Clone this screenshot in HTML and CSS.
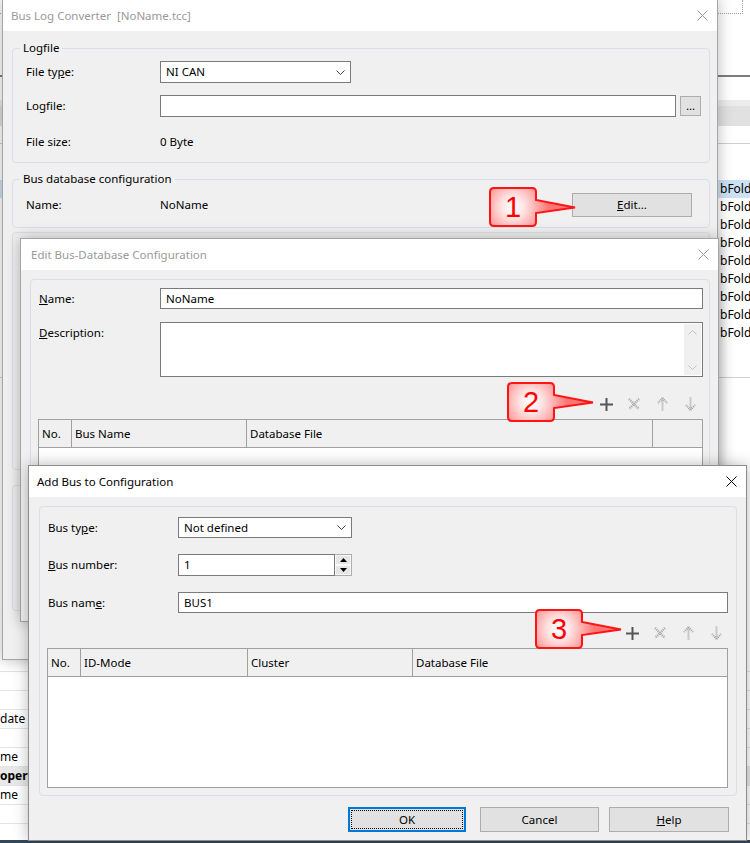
FILE: index.html
```html
<!DOCTYPE html>
<html lang="en">
<head>
<meta charset="UTF-8">
<meta name="viewport" content="width=device-width, initial-scale=1.0">
<title>Bus Log Converter</title>
<link rel="stylesheet" href="styles.css">
</head>
<body>

<!-- application behind the dialogs -->
<div class="app">
  <div class="app-tool"><div class="app-mark"></div></div>
  <div class="app-tabs"></div>
  <div class="app-cols"></div>
  <div class="app-list">
    <div class="app-row sel"><span class="skip"></span>bFold</div>
    <div class="app-row"><span class="skip"></span>bFold</div>
    <div class="app-row"><span class="skip"></span>bFold</div>
    <div class="app-row"><span class="skip"></span>bFold</div>
    <div class="app-row"><span class="skip"></span>bFold</div>
    <div class="app-row"><span class="skip"></span>bFold</div>
    <div class="app-row"><span class="skip"></span>bFold</div>
    <div class="app-row"><span class="skip"></span>bFold</div>
    <div class="app-row"><span class="skip"></span>bFold</div>
  </div>
  <div class="props">
    <div class="prop"></div>
    <div class="prop"></div>
    <div class="prop"></div>
    <div class="prop">date</div>
    <div class="prop"></div>
    <div class="prop">me</div>
    <div class="prop cat">operti</div>
    <div class="prop">me</div>
    <div class="prop"></div>
    <div class="prop"></div>
  </div>
  <div class="taskbar"></div>
</div>

<!-- Bus Log Converter -->
<div class="win win-main">
  <div class="titlebar">
    <span>Bus Log Converter&nbsp; [NoName.tcc]</span>
    <svg class="close" width="11" height="11" viewBox="0 0 11 11"><path d="M0.5 0.5L10.5 10.5M10.5 0.5L0.5 10.5" stroke="currentColor" stroke-width="1"/></svg>
  </div>
  <div class="win-body">
    <fieldset class="grp">
      <legend>Logfile</legend>
      <div class="form form-log">
        <label>File ty<u>p</u>e:</label>
        <div class="select sel-type">NI CAN
          <svg width="9" height="5" viewBox="0 0 9 5"><path d="M0.5 0.5L4.5 4.5L8.5 0.5" fill="none" stroke="#444"/></svg>
        </div>
        <label>Lo<u>g</u>file:</label>
        <div class="file-row">
          <div class="input"></div>
          <button class="btn btn-dots">...</button>
        </div>
        <label>File size:</label>
        <span>0 Byte</span>
      </div>
    </fieldset>

    <fieldset class="grp grp-db">
      <legend>Bus database configuration</legend>
      <div class="form form-db">
        <label>Name:</label>
        <span>NoName</span>
        <button class="btn btn-edit"><u>E</u>dit...</button>
      </div>
    </fieldset>

    <div class="grp-plain grp-a"></div>
    <div class="grp-plain grp-b"></div>
  </div>
</div>

<!-- Edit Bus-Database Configuration -->
<div class="win win-edit">
  <div class="titlebar">
    <span>Edit Bus-Database Configuration</span>
    <svg class="close" width="11" height="11" viewBox="0 0 11 11"><path d="M0.5 0.5L10.5 10.5M10.5 0.5L0.5 10.5" stroke="currentColor" stroke-width="1"/></svg>
  </div>
  <div class="win-body">
    <div class="box">
      <div class="stack stack-edit">
        <div class="frow">
          <label><u>N</u>ame:</label>
          <div class="input h21">NoName</div>
        </div>
        <div class="frow frow-top">
          <label><u>D</u>escription:</label>
          <div class="textarea">
            <div class="vscroll">
              <svg width="9" height="5" viewBox="0 0 9 5"><path d="M0.5 4.5L4.5 0.5L8.5 4.5" fill="none" stroke="#c2c2c2"/></svg>
              <svg width="9" height="5" viewBox="0 0 9 5"><path d="M0.5 0.5L4.5 4.5L8.5 0.5" fill="none" stroke="#c2c2c2"/></svg>
            </div>
          </div>
        </div>
        <div class="tools tools-edit">
          <span class="tool"><svg width="13" height="13" viewBox="0 0 13 13"><path d="M6.5 0V13M0 6.5H13" stroke="#555" stroke-width="2"/></svg></span>
          <span class="tool"><svg width="12" height="12" viewBox="0 0 12 12"><path d="M1 1L11 11M11 1L1 11" stroke="#a2a2a2" stroke-width="2.5" stroke-dasharray="1 1"/></svg></span>
          <span class="tool"><svg width="11" height="14" viewBox="0 0 11 14"><path d="M5.5 1L1 6M5.5 1L10 6M5.5 1.5V14" fill="none" stroke="#a2a2a2" stroke-width="2" stroke-dasharray="1 1"/></svg></span>
          <span class="tool"><svg width="11" height="14" viewBox="0 0 11 14"><path d="M5.5 13L1 8M5.5 13L10 8M5.5 12.5V0" fill="none" stroke="#a2a2a2" stroke-width="2" stroke-dasharray="1 1"/></svg></span>
        </div>
        <div class="tbl tbl-buses">
          <div class="thead">
            <div>No.</div>
            <div>Bus Name</div>
            <div>Database File</div>
            <div></div>
          </div>
          <div class="tbody"></div>
        </div>
      </div>
    </div>
  </div>
</div>

<!-- Add Bus to Configuration -->
<div class="win win-add">
  <div class="titlebar">
    <span>Add Bus to Configuration</span>
    <svg class="close" width="11" height="11" viewBox="0 0 11 11"><path d="M0.5 0.5L10.5 10.5M10.5 0.5L0.5 10.5" stroke="currentColor" stroke-width="1"/></svg>
  </div>
  <div class="win-body">
    <div class="box">
      <div class="stack stack-add">
        <div class="frow">
          <label>Bus ty<u>p</u>e:</label>
          <div class="select sel-bus">Not defined
            <svg width="9" height="5" viewBox="0 0 9 5"><path d="M0.5 0.5L4.5 4.5L8.5 0.5" fill="none" stroke="#444"/></svg>
          </div>
        </div>
        <div class="frow">
          <label><u>B</u>us number:</label>
          <div class="num-row">
            <div class="input">1</div>
            <div class="spin">
              <span><svg width="7" height="4" viewBox="0 0 7 4"><path d="M3.5 0L7 4H0Z" fill="#000"/></svg></span>
              <span><svg width="7" height="4" viewBox="0 0 7 4"><path d="M0 0H7L3.5 4Z" fill="#000"/></svg></span>
            </div>
          </div>
        </div>
        <div class="frow">
          <label>Bus nam<u>e</u>:</label>
          <div class="input h21">BUS1</div>
        </div>
        <div class="tools tools-add">
          <span class="tool"><svg width="13" height="13" viewBox="0 0 13 13"><path d="M6.5 0V13M0 6.5H13" stroke="#555" stroke-width="2"/></svg></span>
          <span class="tool"><svg width="12" height="12" viewBox="0 0 12 12"><path d="M1 1L11 11M11 1L1 11" stroke="#a2a2a2" stroke-width="2.5" stroke-dasharray="1 1"/></svg></span>
          <span class="tool"><svg width="11" height="14" viewBox="0 0 11 14"><path d="M5.5 1L1 6M5.5 1L10 6M5.5 1.5V14" fill="none" stroke="#a2a2a2" stroke-width="2" stroke-dasharray="1 1"/></svg></span>
          <span class="tool"><svg width="11" height="14" viewBox="0 0 11 14"><path d="M5.5 13L1 8M5.5 13L10 8M5.5 12.5V0" fill="none" stroke="#a2a2a2" stroke-width="2" stroke-dasharray="1 1"/></svg></span>
        </div>
        <div class="tbl tbl-ids">
          <div class="thead">
            <div>No.</div>
            <div>ID-Mode</div>
            <div>Cluster</div>
            <div>Database File</div>
          </div>
          <div class="tbody"></div>
        </div>
      </div>
    </div>
    <div class="actions">
      <button class="btn btn-dlg btn-ok">OK</button>
      <button class="btn btn-dlg btn-cancel">Cancel</button>
      <button class="btn btn-dlg btn-help"><u>H</u>elp</button>
    </div>
  </div>
</div>

<!-- numbered callouts -->
<svg class="callout c1" width="90" height="40" viewBox="0 0 90 40">
  <defs><radialGradient id="cg1" gradientUnits="userSpaceOnUse" cx="24" cy="20" r="36"><stop offset="0" stop-color="#fff"/><stop offset="0.3" stop-color="#ffe6e6"/><stop offset="1" stop-color="#ff7474"/></radialGradient></defs>
  <path d="M5 1H43Q47 1 47 5V13L86 20.5L47 26V35Q47 39 43 39H5Q1 39 1 35V5Q1 1 5 1Z" fill="url(#cg1)" stroke="#ff1414" stroke-width="2"/>
  <text x="24" y="30" text-anchor="middle">1</text>
</svg>
<svg class="callout c2" width="90" height="40" viewBox="0 0 90 40">
  <defs><radialGradient id="cg2" gradientUnits="userSpaceOnUse" cx="24" cy="20" r="36"><stop offset="0" stop-color="#fff"/><stop offset="0.3" stop-color="#ffe6e6"/><stop offset="1" stop-color="#ff7474"/></radialGradient></defs>
  <path d="M5 1H43Q47 1 47 5V13L86 20.5L47 26V35Q47 39 43 39H5Q1 39 1 35V5Q1 1 5 1Z" fill="url(#cg2)" stroke="#ff1414" stroke-width="2"/>
  <text x="24" y="30" text-anchor="middle">2</text>
</svg>
<svg class="callout c3" width="90" height="40" viewBox="0 0 90 40">
  <defs><radialGradient id="cg3" gradientUnits="userSpaceOnUse" cx="24" cy="20" r="36"><stop offset="0" stop-color="#fff"/><stop offset="0.3" stop-color="#ffe6e6"/><stop offset="1" stop-color="#ff7474"/></radialGradient></defs>
  <path d="M5 1H43Q47 1 47 5V13L86 20.5L47 26V35Q47 39 43 39H5Q1 39 1 35V5Q1 1 5 1Z" fill="url(#cg3)" stroke="#ff1414" stroke-width="2"/>
  <text x="24" y="30" text-anchor="middle">3</text>
</svg>

</body>
</html>
```

FILE: styles.css
```css
* {
  box-sizing: border-box;
}
body {
  margin: 0;
  width: 750px;
  height: 843px;
  overflow: hidden;
  position: relative;
  background: #fff;
  font-family: "Noto Sans", sans-serif;
  font-size: 11.5px;
  line-height: 16px;
  color: #000;
}

/* application in the background */
.app {
  height: 843px;
  display: flex;
  flex-direction: column;
}
.app-tool {
  height: 77px;
  flex: none;
  border-bottom: 2px solid #7d7d7d;
}
.app-mark {
  width: 743px;
  height: 14px;
  border-right: 1px dotted #a0a0a0;
  border-bottom: 1px dotted #a0a0a0;
}
.app-tabs {
  height: 26px;
  flex: none;
  margin-top: 23px;
  background: linear-gradient(#ececec 0 6px, #e1e1e1 6px);
}
.app-cols {
  height: 18px;
  flex: none;
  border-bottom: 1px solid #cfcfcf;
}
.app-list {
  flex: none;
  padding: 36px 0 35px;
  border-bottom: 1px solid #d0d0d0;
}
.app-row {
  height: 18px;
  line-height: 18px;
  display: flex;
  white-space: nowrap;
  font-size: 12px;
}
.app-row.sel {
  background: #cce2f4;
}
.skip {
  width: 720px;
  flex: none;
}
.props {
  flex: 1;
  margin-top: 275px;
  overflow: hidden;
}
.prop {
  height: 19px;
  line-height: 18px;
  border-bottom: 1px solid #e4e4e4;
  white-space: nowrap;
  font-size: 12px;
}
.prop.cat {
  background: #e8e8e8;
  font-weight: bold;
}
.taskbar {
  height: 3px;
  flex: none;
  background: #34475a;
}

/* dialog windows */
.win {
  position: absolute;
  display: flex;
  flex-direction: column;
  background: #f0f0f0;
  border: 1px solid #a5a5a5;
  box-shadow: 0 0 14px rgba(0, 0, 0, 0.28);
}
.win-main {
  left: 2px;
  top: -1px;
  width: 716px;
  height: 661px;
}
.win-edit {
  left: 20px;
  top: 238px;
  width: 699px;
  height: 384px;
}
.win-add {
  left: 28px;
  top: 465px;
  width: 719px;
  height: 376px;
  border-color: #8c8c8c;
}
.titlebar {
  height: 31px;
  flex: none;
  display: flex;
  align-items: center;
  justify-content: space-between;
  padding: 0 9px 0 8px;
  background: #fff;
  color: #999;
}
.win-edit .titlebar {
  padding-left: 10px;
}
.win-add .titlebar {
  color: #000;
}
.win-body {
  flex: 1;
  display: flex;
  flex-direction: column;
  padding: 9px 7px 0 9px;
}
.win-edit .win-body {
  padding: 9px 8px 0 9px;
}
.win-add .win-body {
  padding: 9px 9px 0 10px;
}

/* group boxes */
.grp {
  margin: 0;
  padding: 0;
  min-width: 0;
  border: 1px solid #d9dfe4;
  border-radius: 4px;
}
.grp legend {
  padding: 0 3px;
  margin-left: 7px;
  line-height: 16px;
}
.grp-db {
  margin-top: 8px;
}
.grp-plain,
.box {
  border: 1px solid #d9dfe4;
  border-radius: 4px;
}
.grp-a {
  margin-top: 4px;
  height: 238px;
}
.grp-b {
  margin-top: 15px;
  height: 126px;
}

/* forms */
.form {
  display: grid;
  align-items: center;
}
.form-log {
  grid-template-columns: 134px 1fr;
  grid-template-rows: 22px 22px 26px;
  row-gap: 12px;
  padding: 5px 8px 7px 13px;
}
.form-db {
  grid-template-columns: 134px 1fr 120px;
  padding: 6px 17px 10px 13px;
}
.select {
  height: 22px;
  display: flex;
  align-items: center;
  justify-content: space-between;
  padding: 0 5px;
  border: 1px solid #7a7a7a;
  background: #fff;
}
.sel-type {
  width: 191px;
}
.sel-bus {
  width: 174px;
  height: 21px;
}
.file-row {
  display: flex;
  align-items: center;
  gap: 4px;
}
.input {
  flex: 1;
  height: 22px;
  display: flex;
  align-items: center;
  padding-left: 5px;
  border: 1px solid #7a7a7a;
  background: #fff;
}
.input.h21 {
  height: 21px;
}
.btn {
  font: inherit;
  color: #000;
  background: #e1e1e1;
  border: 1px solid #adadad;
  padding: 0;
}
.btn-dots {
  width: 21px;
  height: 20px;
  line-height: 12px;
}
.btn-edit {
  height: 24px;
}

.stack {
  display: flex;
  flex-direction: column;
}
.stack-edit {
  padding: 8px 6px 0 8px;
  height: 330px;
}
.stack-add {
  padding: 10px 8px 7px 8px;
}
.frow {
  display: flex;
  align-items: center;
}
.frow + .frow {
  margin-top: 13px;
}
.stack-add .frow + .frow {
  margin-top: 16px;
}
.frow label {
  width: 121px;
  flex: none;
}
.stack-add .frow label {
  width: 130px;
}
.frow-top {
  align-items: flex-start;
}
.frow-top label {
  padding-top: 3px;
}
.textarea {
  flex: 1;
  height: 55px;
  display: flex;
  justify-content: flex-end;
  padding: 1px;
  border: 1px solid #7a7a7a;
  background: #fff;
}
.vscroll {
  width: 17px;
  display: flex;
  flex-direction: column;
  justify-content: space-between;
  align-items: center;
  padding: 6px 0 5px;
  background: #f0f0f0;
}
.num-row {
  width: 174px;
  height: 22px;
  display: flex;
}
.spin {
  width: 17px;
  display: flex;
  flex-direction: column;
  border: 1px solid #adadad;
  border-left: none;
}
.spin span {
  flex: 1;
  display: flex;
  align-items: center;
  justify-content: center;
  background: #e6e6e6;
  border: 1px solid #fafafa;
}

/* toolbar */
.tools {
  height: 26px;
  display: flex;
  align-items: center;
  justify-content: flex-end;
  gap: 4px;
}
.tools-edit {
  margin-top: 14px;
  padding-right: 1px;
}
.tools-add {
  margin-top: 7px;
}
.tool {
  width: 24px;
  height: 24px;
  display: flex;
  align-items: center;
  justify-content: center;
}

/* list views */
.tbl {
  margin: 2px 0 0 -1px;
  border: 1px solid #a0a0a0;
  background: #fff;
  display: flex;
  flex-direction: column;
}
.thead {
  height: 28px;
  display: grid;
  background: #f0f0f0;
  border-bottom: 1px solid #a0a0a0;
}
.thead div {
  line-height: 27px;
  padding-left: 3px;
  border-right: 1px solid #a0a0a0;
  white-space: nowrap;
}
.thead div:last-child {
  border-right: none;
}
.tbl-buses .thead {
  grid-template-columns: 33px 175px 406px 1fr;
}
.tbl-ids .thead {
  grid-template-columns: 33px 167px 165px 1fr;
}
.tbl-buses .tbody {
  height: 150px;
}
.tbl-ids {
  height: 140px;
}
.tbl-ids .tbody {
  flex: 1;
}

/* dialog buttons */
.actions {
  display: flex;
  justify-content: flex-end;
  margin-top: 11px;
  padding-right: 8px;
}
.btn-dlg {
  height: 25px;
}
.btn-ok {
  width: 118px;
  position: relative;
  border: 2px solid #0078d7;
}
.btn-ok::after {
  content: "";
  position: absolute;
  inset: 1px;
  border: 1px dotted #000;
}
.btn-cancel {
  width: 119px;
  margin-left: 14px;
}
.btn-help {
  width: 120px;
  margin-left: 10px;
}

/* red numbered callouts */
.callout {
  position: absolute;
  overflow: visible;
}
.callout text {
  font-family: "Liberation Sans", Arial, sans-serif;
  font-size: 29px;
  fill: #ff0000;
}
.c1 {
  left: 489px;
  top: 187px;
}
.c2 {
  left: 507px;
  top: 382px;
}
.c3 {
  left: 535px;
  top: 609px;
}
```
